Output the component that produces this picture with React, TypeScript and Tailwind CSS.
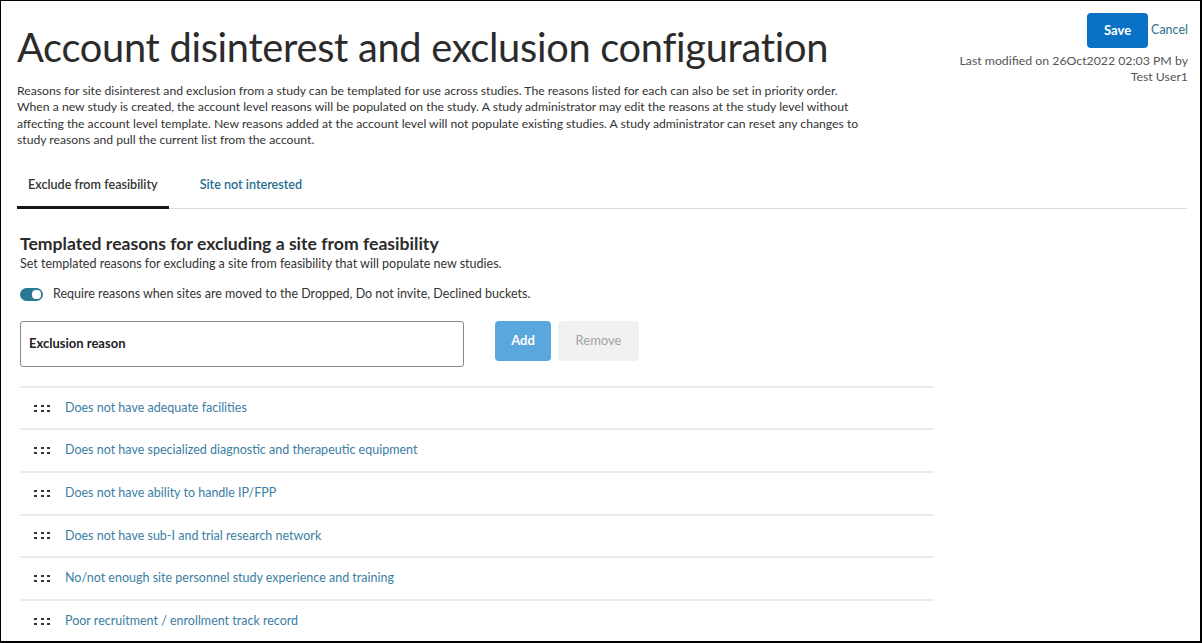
import React from "react";

const reasons = [
  "Does not have adequate facilities",
  "Does not have specialized diagnostic and therapeutic equipment",
  "Does not have ability to handle IP/FPP",
  "Does not have sub-I and trial research network",
  "No/not enough site personnel study experience and training",
  "Poor recruitment / enrollment track record",
];

function DragHandle() {
  return (
    <div className="grid grid-cols-3 gap-x-[4px] gap-y-[3px] w-[16px]">
      {[...Array(6)].map((_, i) => (
        <span key={i} className="block w-[3px] h-[2px] bg-[#333]" />
      ))}
    </div>
  );
}

export default function App() {
  return (
    <div
      className="w-[1202px] h-[643px] bg-white border border-black border-r-2 border-b-2 overflow-hidden text-[#333]"
      style={{ fontFamily: "Lato, 'Noto Sans', sans-serif" }}
    >
      <div className="flex justify-between pl-[16px] pr-[12px]">
        <div className="w-[890px]">
          <h1 className="mt-[22px] text-[39.8px] leading-[48px] text-[#2b2b2b] tracking-[-0.3px]">
            Account disinterest and exclusion configuration
          </h1>
          <p className="mt-[12px] text-[12.2px] leading-[16.3px] text-[#333]">
            Reasons for site disinterest and exclusion from a study can be templated for use across studies. The reasons listed for each can also be set in priority order.
            <br />
            When a new study is created, the account level reasons will be populated on the study. A study administrator may edit the reasons at the study level without
            <br />
            affecting the account level template. New reasons added at the account level will not populate existing studies. A study administrator can reset any changes to
            <br />
            study reasons and pull the current list from the account.
          </p>
        </div>
        <div className="flex flex-col items-end pt-[12px]">
          <div className="flex items-center gap-[3px]">
            <button className="w-[61px] h-[35px] rounded-[4px] bg-[#0a72c6] text-white text-[13px] font-bold">
              Save
            </button>
            <span className="text-[12.5px] text-[#2d6f8e]">Cancel</span>
          </div>
          <div className="mt-[5px] text-[12.3px] leading-[16px] text-[#555] text-right">
            Last modified on 26Oct2022 02:03 PM by
            <br />
            Test User1
          </div>
        </div>
      </div>

      <div className="mx-[16px] mr-[13px] mt-[28px] border-b border-[#dcdcdc] flex">
        <div className="px-[11px] pb-[11px] border-b-[3px] border-[#161616] -mb-[1px] text-[12.6px] font-semibold text-[#333]">
          Exclude from feasibility
        </div>
        <div className="pl-[31px] text-[12.6px] font-semibold text-[#1f6e8e]">
          Site not interested
        </div>
      </div>

      <div className="pl-[19px]">
        <h2 className="mt-[25px] text-[17.6px] leading-[20px] font-bold text-[#2b2b2b]">
          Templated reasons for excluding a site from feasibility
        </h2>
        <div className="mt-[2px] text-[12.5px] leading-[16px] text-[#333]">
          Set templated reasons for excluding a site from feasibility that will populate new studies.
        </div>
        <div className="mt-[13px] flex items-center gap-[10px]">
          <div className="w-[23px] h-[13px] rounded-full bg-[#2a7893] flex items-center justify-end pr-[2px]">
            <span className="block w-[9px] h-[9px] rounded-[4px] bg-white" />
          </div>
          <span className="text-[12.5px] text-[#333]">
            Require reasons when sites are moved to the Dropped, Do not invite, Declined buckets.
          </span>
        </div>

        <div className="mt-[17px] flex items-start">
          <div className="w-[444px] h-[46px] border border-[#888] rounded-[3px] flex items-center pl-[8px]">
            <span className="text-[13px] font-bold text-[#222]">Exclusion reason</span>
          </div>
          <button className="ml-[31px] w-[56px] h-[40px] rounded-[4px] bg-[#5aa7dd] text-white text-[13px] font-bold">
            Add
          </button>
          <button className="ml-[7px] w-[81px] h-[40px] rounded-[4px] bg-[#f1f1f1] text-[#a2a2a2] text-[13px]">
            Remove
          </button>
        </div>

        <div className="mt-[19px] w-[914px]">
          {reasons.map((r) => (
            <div
              key={r}
              className="h-[42.6px] border-t-2 border-[#ececec] flex items-center pl-[14px] gap-[15px]"
            >
              <DragHandle />
              <span className="text-[12.5px] text-[#3a7ea3]">{r}</span>
            </div>
          ))}
        </div>
      </div>
    </div>
  );
}
